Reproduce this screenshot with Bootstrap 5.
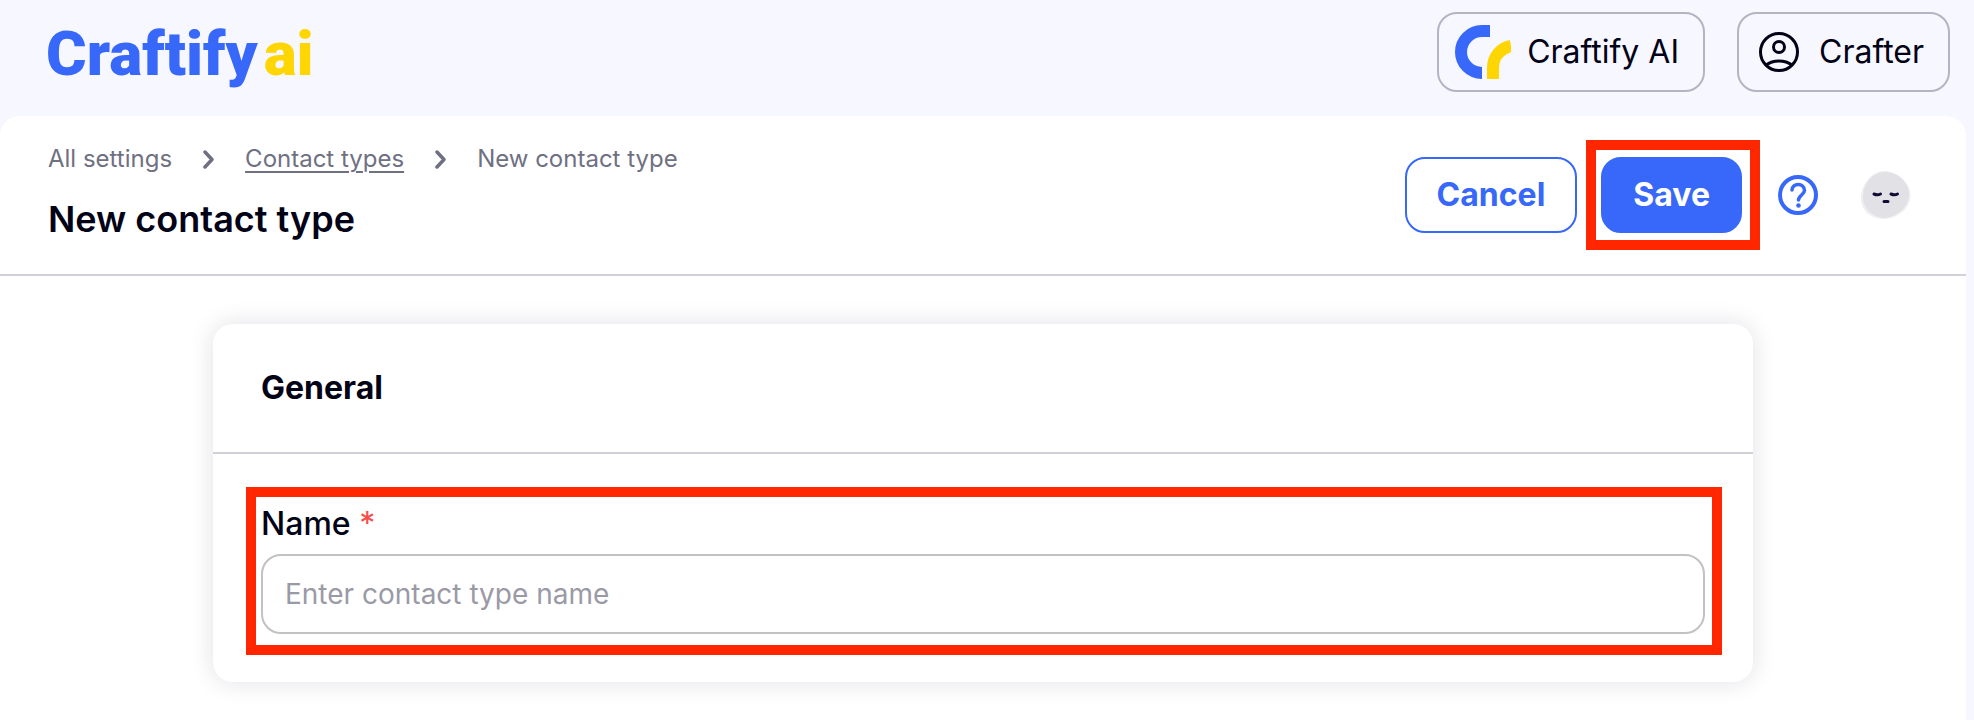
<!DOCTYPE html>
<html lang="en">
<head>
<meta charset="utf-8">
<meta name="viewport" content="width=device-width, initial-scale=1">
<title>New contact type – Craftify AI</title>
<link href="https://cdn.jsdelivr.net/npm/bootstrap@5.3.0/dist/css/bootstrap.min.css" rel="stylesheet">
<style>
  :root { --brand: #3768f9; --sun: #ffd502; --ink: #030317; --muted: #6f7082; --rule: #d1d1da; --mark: #ff2600; }
  body { background: #f7f7ff; color: var(--ink); font-family: Inter, "Liberation Sans", sans-serif; }
  .topbar { padding: 12px 24px 24px 46px; }
  .wordmark { font: 900 62px/76px Roboto, "Liberation Sans", sans-serif; color: var(--brand); gap: 6px; }
  .wordmark:hover { color: var(--brand); }
  .wordmark-ai { color: var(--sun); }
  .pill { height: 80px; border: 2px solid #b4b4c2; border-radius: 20px; font-size: 32px; line-height: 48px; color: var(--ink); padding: 0 24px 0 16px; }
  .pill-user { padding-left: 20px; gap: 4px; }
  .panel { background: #fff; margin-right: 8px; border-radius: 20px 20px 0 0; }
  .page-head { padding: 24px 55px 24px 48px; border-bottom: 2px solid var(--rule); }
  .crumbs { font-size: 24px; line-height: 38px; gap: 30px; margin-bottom: 17px; color: var(--muted); }
  .crumbs a { color: inherit; }
  .crumbs .current-trail { text-underline-offset: 4px; text-decoration-thickness: 2px; }
  .page-title { font-size: 36px; line-height: 48px; font-weight: 600; }
  .action { height: 76px; border-radius: 20px; border-width: 2px; font-size: 32px; line-height: 48px; font-weight: 700; padding: 0 30px; }
  .btn-brand { background: var(--brand); border-color: var(--brand); color: #fff; }
  .btn-brand-outline { border-color: var(--brand); color: var(--brand); background: #fff; }
  .callout-frame { border: 10px solid var(--mark); }
  .callout-save { padding: 7px 8px 7px 5px; margin: 0 18px 0 9px; }
  .callout-name { padding: 3px 7px 11px 5px; }
  .help { margin-right: 43px; }
  .form-area { padding: 48px 24px 38px; }
  .panel-card { max-width: 1540px; border: 0; border-radius: 20px; box-shadow: 0 0 24px rgba(20, 20, 60, .13); }
  .panel-card-head { padding: 40px 48px; border-bottom: 2px solid var(--rule); }
  .panel-card-head h2 { font-size: 32px; line-height: 48px; font-weight: 700; }
  .panel-card-body { padding: 33px 31px 27px 33px; }
  .field-label { font-size: 32px; line-height: 48px; font-weight: 500; margin-bottom: 6px; }
  .required { color: #fa4b4b; font-weight: 400; }
  .field { height: 80px; border: 2px solid #c2c2c2; border-radius: 20px; font-size: 28px; padding: 0 22px; }
  .field::placeholder { color: #9a9aa6; opacity: 1; }
</style>
</head>
<body class="min-vh-100 d-flex flex-column">
<header class="topbar d-flex align-items-center justify-content-between">
  <a href="#" class="wordmark d-flex pt-1 text-decoration-none"><span>Craftify</span><span class="wordmark-ai">ai</span></a>
  <div class="d-flex gap-4">
    <button type="button" class="btn pill d-flex align-items-center me-2">
      <svg class="me-3" width="56" height="54" viewBox="0 0 56 54" fill="none" stroke-width="12" aria-hidden="true">
        <path stroke="#3768f9" d="M35 6H27A21 21 0 0 0 27 48"/>
        <path stroke="#ffd502" d="M38 54V43C38 31 46 23 56 21"/>
      </svg>
      Craftify AI
    </button>
    <button type="button" class="btn pill pill-user d-flex align-items-center">
      <svg class="me-3" width="40" height="40" viewBox="0 0 40 40" fill="none" stroke="#030317" stroke-width="3" aria-hidden="true">
        <circle cx="20" cy="20" r="18.5"/><circle cx="20" cy="15" r="5.5"/><path d="M7 33C14 27.500 26 27.500 33 33"/>
      </svg>
      Crafter
    </button>
  </div>
</header>

<main class="panel flex-grow-1">
  <div class="page-head d-flex align-items-start justify-content-between">
    <div>
      <nav aria-label="Breadcrumb" class="crumbs d-flex align-items-center">
        <a href="#" class="text-decoration-none">All settings</a>
        <svg width="13" height="20" viewBox="0 0 13 20" fill="none" stroke="#6f7082" stroke-width="3.500" stroke-linecap="round" stroke-linejoin="round" aria-hidden="true"><path d="M3 3L10 10.500L3 18"/></svg>
        <a href="#" class="current-trail">Contact types</a>
        <svg width="13" height="20" viewBox="0 0 13 20" fill="none" stroke="#6f7082" stroke-width="3.500" stroke-linecap="round" stroke-linejoin="round" aria-hidden="true"><path d="M3 3L10 10.500L3 18"/></svg>
        <span aria-current="page">New contact type</span>
      </nav>
      <h1 class="page-title mb-0">New contact type</h1>
    </div>
    <div class="d-flex align-items-center">
      <button type="button" class="btn action btn-brand-outline">Cancel</button>
      <div class="callout-frame callout-save">
        <button type="submit" form="contact-type" class="btn action btn-brand d-block">Save</button>
      </div>
      <button type="button" class="btn help border-0 p-0 d-flex" aria-label="Help">
        <svg width="40" height="40" viewBox="0 0 40 40" fill="none" stroke="#3768f9" stroke-width="4" aria-hidden="true">
          <circle cx="20" cy="20" r="18"/>
          <path stroke-width="3.500" stroke-linecap="round" d="M14 15C14 7.500 26.500 7.500 26.500 15.500C26.500 19.500 20.500 20.500 20.500 25"/>
          <circle cx="20.500" cy="30.500" r="2.300" fill="#3768f9" stroke="none"/>
        </svg>
      </button>
      <button type="button" class="btn border-0 p-0 d-flex" aria-label="Account">
        <svg width="50" height="48" viewBox="0 0 50 48" aria-hidden="true">
          <path fill="#efeff2" d="M22 0C34-1 49 10 49.500 24C50 37 37 47 24 48C10 48 0 40 0 27C0 14 10 1 22 0Z"/>
          <path fill="#e1e1e6" d="M25 1C38 2 48 12 48 23C48 36 36 46 23 47C11 46 2 37 2 26C2 12 12 1 25 1Z"/>
          <g fill="none" stroke="#110b36" stroke-width="3" stroke-linecap="round">
            <path d="M13 23Q16.500 24.500 19.500 23M30 23Q33.500 24.500 36.500 23M23 30.500H27"/>
          </g>
        </svg>
      </button>
    </div>
  </div>

  <div class="form-area">
    <form id="contact-type" class="card panel-card mx-auto">
      <div class="panel-card-head"><h2 class="mb-0">General</h2></div>
      <div class="panel-card-body">
        <div class="callout-frame callout-name">
          <label for="type-name" class="field-label d-block">Name <span class="required">*</span></label>
          <input id="type-name" type="text" class="form-control field" placeholder="Enter contact type name" required>
        </div>
      </div>
    </form>
  </div>
</main>
<script src="https://cdn.jsdelivr.net/npm/bootstrap@5.3.0/dist/js/bootstrap.bundle.min.js"></script>
</body>
</html>
